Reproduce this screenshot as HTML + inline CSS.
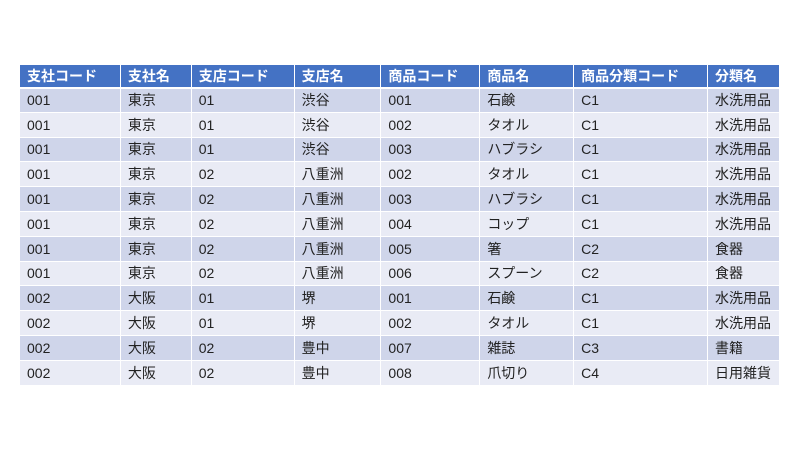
<html><head><style>
body{margin:0;width:800px;height:450px;background:#fff;font-family:"Liberation Sans","Noto Sans CJK JP",sans-serif;}
table{position:absolute;left:19px;top:64px;border-collapse:collapse;width:761px;}
td,th{border:1px solid #fff;padding:0 0 0 7px;height:24.8px;font-size:14px;text-align:left;color:#222;white-space:nowrap;}
th{background:#4472c4;color:#fff;font-weight:bold;border-bottom:2px solid #fff;height:23px;}
tr:nth-child(odd) td{background:#cfd5ea}
tr:nth-child(even) td{background:#e9ebf5}
</style></head><body>
<table>
<colgroup><col style="width:101px"><col style="width:71px"><col style="width:103px"><col style="width:87px"><col style="width:99px"><col style="width:94px"><col style="width:134px"><col style="width:72px"></colgroup>
<thead><tr><th>支社コード</th><th>支社名</th><th>支店コード</th><th>支店名</th><th>商品コード</th><th>商品名</th><th>商品分類コード</th><th>分類名</th></tr></thead>
<tbody>
<tr><td>001</td><td>東京</td><td>01</td><td>渋谷</td><td>001</td><td>石鹸</td><td>C1</td><td>水洗用品</td></tr>
<tr><td>001</td><td>東京</td><td>01</td><td>渋谷</td><td>002</td><td>タオル</td><td>C1</td><td>水洗用品</td></tr>
<tr><td>001</td><td>東京</td><td>01</td><td>渋谷</td><td>003</td><td>ハブラシ</td><td>C1</td><td>水洗用品</td></tr>
<tr><td>001</td><td>東京</td><td>02</td><td>八重洲</td><td>002</td><td>タオル</td><td>C1</td><td>水洗用品</td></tr>
<tr><td>001</td><td>東京</td><td>02</td><td>八重洲</td><td>003</td><td>ハブラシ</td><td>C1</td><td>水洗用品</td></tr>
<tr><td>001</td><td>東京</td><td>02</td><td>八重洲</td><td>004</td><td>コップ</td><td>C1</td><td>水洗用品</td></tr>
<tr><td>001</td><td>東京</td><td>02</td><td>八重洲</td><td>005</td><td>箸</td><td>C2</td><td>食器</td></tr>
<tr><td>001</td><td>東京</td><td>02</td><td>八重洲</td><td>006</td><td>スプーン</td><td>C2</td><td>食器</td></tr>
<tr><td>002</td><td>大阪</td><td>01</td><td>堺</td><td>001</td><td>石鹸</td><td>C1</td><td>水洗用品</td></tr>
<tr><td>002</td><td>大阪</td><td>01</td><td>堺</td><td>002</td><td>タオル</td><td>C1</td><td>水洗用品</td></tr>
<tr><td>002</td><td>大阪</td><td>02</td><td>豊中</td><td>007</td><td>雑誌</td><td>C3</td><td>書籍</td></tr>
<tr><td>002</td><td>大阪</td><td>02</td><td>豊中</td><td>008</td><td>爪切り</td><td>C4</td><td>日用雑貨</td></tr>
</tbody></table>
</body></html>
